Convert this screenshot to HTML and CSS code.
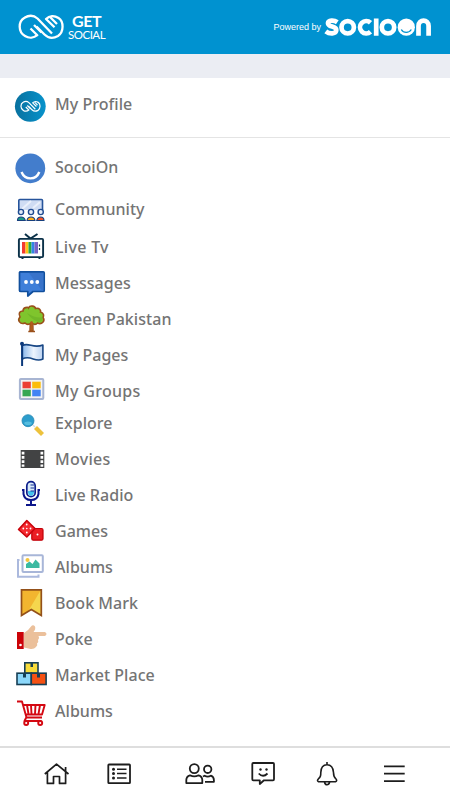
FILE: index.html
```
<!DOCTYPE html>
<html lang="en">
<head>
<meta charset="utf-8">
<title>Get Social</title>
<link rel="stylesheet" href="styles.css">
</head>
<body>
<header class="topbar">
  <div class="brand">
    <svg class="brand-mark" viewBox="18 14 46 26" fill="none" stroke="#fff" stroke-width="2.300" stroke-linejoin="round">
      <path d="M30.500 28.500L37.300 35.200C34 38 29 38.500 25 36C18 32 18 21.500 24.500 17.800C29 15 34 15.500 37.500 18.500L52 33.500M34 25L41.500 32.500"/>
      <path d="M54.500 27.300L46 19C49.500 15.500 54.500 15.500 58.500 18C64 21.500 64 32 58 36C53 38.800 48 38 44.500 34.500L36.500 26.500M50.500 17.500L57 24"/>
    </svg>
    <div class="brand-name"><span class="get">GET</span><span class="social">SOCIAL</span></div>
  </div>
  <div class="powered">
    <span class="powered-by">Powered by</span>
    <svg class="socioon" viewBox="324 17 109 20" role="img" aria-label="socioon" fill="none" stroke="#fff" stroke-width="4.700">
      <path d="M337.300 22.200C334 19.900 328.200 20 328 23.200C328 27.500 336.300 25.700 336.300 30C336.200 34.200 329.500 34.200 325.800 31.300"/>
      <circle cx="347.700" cy="27.300" r="6.200"/>
      <path d="M370.500 22.800A6.200 6.200 0 1 0 370.500 31.800M376.200 18.400V35.800"/>
      <circle cx="388" cy="27.300" r="6.200"/>
      <circle cx="406.300" cy="27.200" r="8.600" fill="#fff" stroke="none"/>
      <path d="M401.300 29.500C403.500 33.300 409 33.300 411.300 29.500" stroke="#0092d0" stroke-width="1.300"/>
      <path d="M418.500 35.800V26C418.500 18.800 428.600 18.800 428.600 26V35.800"/>
    </svg>
  </div>
</header>
<main>
  <section class="profile">
    <a class="row row-profile">
      <svg class="icon" viewBox="14 78 34 56">
        <defs><linearGradient id="disc"><stop stop-color="#08719f"/><stop offset="1" stop-color="#0792cb"/></linearGradient></defs>
        <circle cx="30.300" cy="106.300" r="15.400" fill="url(#disc)"/>
        <g transform="translate(20.200 100.600) scale(.445) translate(-18 -14)" fill="none" stroke="#fff" stroke-width="2.700">
          <path d="M30.500 28.500L37.300 35.200C34 38 29 38.500 25 36C18 32 18 21.500 24.500 17.800C29 15 34 15.500 37.500 18.500L52 33.500M34 25L41.500 32.500"/>
          <path d="M54.500 27.300L46 19C49.500 15.500 54.500 15.500 58.500 18C64 21.500 64 32 58 36C53 38.800 48 38 44.500 34.500L36.500 26.500M50.500 17.500L57 24"/>
        </g>
      </svg>
      <span class="label">My Profile</span>
    </a>
  </section>
  <nav class="menu">
    <a class="row row-first">
      <svg class="icon" viewBox="14 146 34 44"><circle cx="30.300" cy="168.300" r="14.900" fill="#437dcc"/><path d="M21.500 172C25 180.500 36 180.500 39.300 172" fill="none" stroke="#fff" stroke-width="2.400"/></svg>
      <span class="label">SocoiOn</span>
    </a>
    <a class="row row-community">
      <svg class="icon" viewBox="14 190 34 40">
        <path d="M18.800 210V200.500Q18.800 199.500 19.800 199.500H41.500Q42.500 199.500 42.500 200.500V210" fill="#cfdcf3" stroke="#26549b" stroke-width="1.600"/>
        <path d="M22 209L31 201M33 208L40 202" stroke="#eaf0fb" stroke-width="2"/>
        <path d="M17.500 220.500Q17.500 217 21 217T25.300 220.500Z" fill="#1c9c84" stroke="#173f7d" stroke-width="1.100"/>
        <path d="M27 220.500Q27.500 217 31 217T35 220.500Z" fill="#ffad17" stroke="#173f7d" stroke-width="1.100"/>
        <path d="M36.700 220.500Q37.500 217 40.700 217T44 220.500Z" fill="#f55224" stroke="#173f7d" stroke-width="1.100"/>
        <g fill="#e4ecf9" stroke="#1e4b91" stroke-width="1.400"><circle cx="21" cy="212" r="2.600"/><circle cx="31" cy="212" r="2.600"/><circle cx="40.700" cy="212" r="2.600"/></g>
      </svg>
      <span class="label">Community</span>
    </a>
    <a class="row">
      <svg class="icon" viewBox="14 230 34 36">
        <path d="M25 234L30.500 238.500L37.500 234M22.500 257V259M39.500 257V259" fill="none" stroke="#0b3148" stroke-width="2"/>
        <rect x="18.900" y="238.900" width="24.200" height="18.200" rx="1" fill="#fff" stroke="#0b3148" stroke-width="1.900"/>
        <path fill="#f23b2f" d="M22 242h3.500v11.500H22z"/><path fill="#ffc414" d="M25.500 242h3v11.500h-3z"/><path fill="#27a844" d="M28.500 242h3v11.500h-3z"/><path fill="#3184e5" d="M31.500 242h3v11.500h-3z"/><path fill="#7862c4" d="M34.500 242h3.500v11.500h-3.500z"/>
        <path d="M39.500 244.500v2M39.500 248v2" stroke="#0b3148" stroke-width="1.200"/>
      </svg>
      <span class="label wide">Live Tv</span>
    </a>
    <a class="row">
      <svg class="icon" viewBox="14 266 34 36">
        <path d="M20 271.900H43.300Q44.200 271.900 44.200 272.800V290.500Q44.200 291.500 43.200 291.500H33L27.800 296V291.500H21Q19.500 291.500 19.500 290.500V272.500Z" fill="#3f7fd9" stroke="#114f9d" stroke-width="1.700" stroke-linejoin="round"/>
        <path d="M29 273H43.300V290.500H42Z" fill="#3873ca"/>
        <g fill="#fff"><circle cx="26" cy="282" r="1.900"/><circle cx="31.800" cy="282" r="1.900"/><circle cx="37.300" cy="282" r="1.900"/></g>
      </svg>
      <span class="label">Messages</span>
    </a>
    <a class="row">
      <svg class="icon" viewBox="14 302 34 36">
        <path d="M30.500 318H32.700L33 331H30Z" fill="#c56b25" stroke="#9a501b" stroke-width="1.500"/>
        <path d="M25 323C20 325 17 320 20 317C18 313 20 311 23 311C23 307 28 307 28.500 308C30 304.800 35 306 35.500 308.500C40 307.500 41 311 40.500 312C44 313 44 316 43 317.500C45.500 321 42 325 37.500 323Q35 326 31.500 322.500Q28 326 25 323Z" fill="#7fc52d" stroke="#9a501b" stroke-width="1.600"/>
        <path d="M27 313Q31 319 38 322Q43 322 42.500 317Q37 319 27 313Z" fill="#72b829"/>
        <path d="M31.600 321.500V330" stroke="#b35c1d" stroke-width="2.400"/><path d="M28.300 331.500H35" stroke="#9a501b" stroke-width="1.500"/>
      </svg>
      <span class="label">Green Pakistan</span>
    </a>
    <a class="row">
      <svg class="icon" viewBox="14 338 34 36">
        <defs><linearGradient id="flag"><stop stop-color="#8ab7ea"/><stop offset=".55" stop-color="#edf4fd"/><stop offset="1" stop-color="#bad1f0"/></linearGradient></defs>
        <path d="M22.300 345.500C29 342 33 349 42.900 345V359C35 363 31 354.500 22.300 359Z" fill="url(#flag)" stroke="#174684" stroke-width="1.600" stroke-linejoin="round"/>
        <path d="M22.100 344V366" stroke="#0c397b" stroke-width="2"/><circle cx="22" cy="343.800" r="2" fill="#0c397b"/>
      </svg>
      <span class="label">My Pages</span>
    </a>
    <a class="row row-groups">
      <svg class="icon" viewBox="14 374 34 32">
        <rect x="19.900" y="378.900" width="23.400" height="20.200" rx="1" fill="#f3f3f3" stroke="#a8b5d2" stroke-width="2"/>
        <path fill="#eb4034" d="M22.500 381.700h8.300v6.600h-8.300z"/><path fill="#fcbd0b" d="M32.200 381.700h8.500v6.600h-8.500z"/><path fill="#35a752" d="M22.500 389.700h8.300v6.600h-8.300z"/><path fill="#4284f4" d="M32.200 389.700h8.500v6.600h-8.500z"/>
      </svg>
      <span class="label wide">My Groups</span>
    </a>
    <a class="row">
      <svg class="icon" viewBox="14 406 34 36">
        <path d="M32 424L35 427" stroke="#d5dee1" stroke-width="1.500"/><path d="M35.500 427.500L42.500 434.500" stroke="#edc23c" stroke-width="4.300"/>
        <circle cx="28" cy="420.700" r="6" fill="#2c9dcc" stroke="#2186b3" stroke-width=".8"/><ellipse cx="28" cy="423.300" rx="3.800" ry="1.800" fill="#55bddf"/>
      </svg>
      <span class="label">Explore</span>
    </a>
    <a class="row">
      <svg class="icon" viewBox="14 442 34 36">
        <path d="M20.700 450H44.300V468H20.700Z" fill="#424344"/>
        <path d="M21.700 451.800h2.700v2.700h-2.700zM21.700 456h2.700v2.700h-2.700zM21.700 460.200h2.700v2.700h-2.700zM21.700 464.400h2.700v2.300h-2.700zM40.500 451.800h2.700v2.700h-2.700zM40.500 456h2.700v2.700h-2.700zM40.500 460.200h2.700v2.700h-2.700zM40.500 464.400h2.700v2.300h-2.700z" fill="#fff"/>
      </svg>
      <span class="label wide">Movies</span>
    </a>
    <a class="row">
      <svg class="icon" viewBox="14 478 34 36">
        <rect x="26.800" y="481.700" width="8.400" height="15" rx="4.200" fill="#d9eaf9" stroke="#0c1e8b" stroke-width="1.700"/>
        <path d="M28 491H34V493Q33 496 31 496T28 493Z" fill="#43c2ed"/>
        <path d="M30.500 485H34M30.500 488H34M30.500 491H34" stroke="#173096" stroke-width="1.200"/>
        <path d="M22 490H23.500V494Q24.500 500 31 500T38.500 494V490H40M31 500V505M26 505H36" fill="none" stroke="#0c168b" stroke-width="2"/>
      </svg>
      <span class="label">Live Radio</span>
    </a>
    <a class="row">
      <svg class="icon" viewBox="14 514 34 36">
        <rect x="31.800" y="528.500" width="11.200" height="11.700" rx="1.500" fill="#ea1e24" stroke="#c10008" stroke-width="1.200"/>
        <path d="M26.800 520.500L35 528.500L26.800 537L18.500 529.500Z" fill="#f52b31" stroke="#c9030b" stroke-width="1.500" stroke-linejoin="round"/>
        <g fill="#fff"><circle cx="26.700" cy="524.500" r=".9"/><circle cx="23.300" cy="528.500" r=".9"/><circle cx="30.500" cy="528.500" r=".9"/><circle cx="26.800" cy="532.500" r=".9"/><circle cx="26.800" cy="528.500" r=".8"/><circle cx="37.500" cy="534.400" r="1"/></g>
      </svg>
      <span class="label">Games</span>
    </a>
    <a class="row">
      <svg class="icon" viewBox="14 550 34 36">
        <path d="M19.500 560H18V576.700H38.500V574.500" fill="none" stroke="#abb9dd" stroke-width="2"/>
        <rect x="22.500" y="555.300" width="20.300" height="16.700" rx="1" fill="#fff" stroke="#a8b6d8" stroke-width="2"/>
        <path d="M26 568V564L29.500 561.500L32.500 564L35.500 559.500L39.500 563.500V568Z" fill="#3cbaa2"/><circle cx="27.500" cy="560" r="2" fill="#f4c53c"/>
      </svg>
      <span class="label">Albums</span>
    </a>
    <a class="row">
      <svg class="icon" viewBox="14 586 34 36">
        <path d="M21.500 589.800H41.300V615.500L31.300 609.500L21.500 615.500Z" fill="#f2b52f"/><path d="M40.800 590L28 611.500L31.300 609.500L41.300 615.500Z" fill="#f5d64e"/>
        <path d="M21.500 589.800H41.300V615.500L31.300 609.500L21.500 615.500Z" fill="none" stroke="#935019" stroke-width="1.700"/>
      </svg>
      <span class="label">Book Mark</span>
    </a>
    <a class="row">
      <svg class="icon" viewBox="14 622 34 36">
        <path d="M24 633Q28 631 31 626.500Q33 624 35 626.500Q36 629 33.500 632H45Q48 634 45 636H38.500Q40 638 38 640Q39 642 37 643.500Q38 645 36 647Q34 649.500 30.500 649L24 647.500Z" fill="#ebc09b"/><path d="M17 632H23.700V649H17Z" fill="#cb0307"/><circle cx="20.500" cy="645" r="1.300" fill="#fff"/>
      </svg>
      <span class="label">Poke</span>
    </a>
    <a class="row">
      <svg class="icon" viewBox="14 658 34 36">
        <g stroke="#173f55" stroke-width="1.600"><rect x="24.800" y="662.800" width="13.200" height="10.400" fill="#f7dc3b"/><rect x="17" y="673.200" width="14.300" height="11.300" fill="#8bd7fa"/><rect x="31.300" y="673.200" width="14.800" height="11.300" fill="#f55113"/></g>
        <path d="M30.500 663H33V667H30.500zM23 673H26V677.500H23zM37 673H40V677.500H37z" fill="#173f55"/>
      </svg>
      <span class="label">Market Place</span>
    </a>
    <a class="row">
      <svg class="icon" viewBox="14 694 34 36" fill="none" stroke="#d40812" stroke-width="1.900">
        <path d="M17 701.500H22L26.500 717.500H42M22.800 705H44.700L42 714.500H26M26.500 717L24.500 721H41.500" stroke-linejoin="round"/>
        <path d="M27 705L28.500 714M31 705L31.500 714M35.500 705L35 714M40 705L38.500 714"/>
        <circle cx="26.200" cy="723" r="2" fill="#fff"/><circle cx="40.200" cy="723" r="2" fill="#fff"/>
      </svg>
      <span class="label">Albums</span>
    </a>
  </nav>
</main>
<footer class="tabs">
  <a class="tab"><svg viewBox="42 760 28 28"><path d="M44.800 774L56.500 764.200L68.500 774M47.400 772V783.400H53.500V776.500H59.500V783.400H65.600V772M65.600 771V767" stroke-width="1.700"/></svg></a>
  <a class="tab tab-list"><svg viewBox="105 760 28 28"><rect x="108.300" y="764.500" width="21.700" height="18.600" rx=".7"/><path d="M117 769.300H126.500M117 773.500H126.500M117 778H126.500" stroke-width="1.400"/><g fill="#1d1d1d" stroke="none"><circle cx="113.500" cy="769.300" r="1.500"/><circle cx="113.500" cy="773.500" r="1.500"/><circle cx="113.500" cy="778" r="1.500"/></g></svg></a>
  <a class="tab tab-people"><svg viewBox="182 760 36 28"><circle cx="194.300" cy="768.600" r="4.500"/><circle cx="207.700" cy="769.300" r="3.700"/><path d="M190 775.300Q194.300 777.500 198.600 775.300Q202.300 776.500 202.300 780V783.100H186.300V780Q186.300 776.500 190 775.300ZM203 776.500L204.600 775.700Q207.700 777.500 210.800 775.700Q213.900 776.800 213.900 780V781.800H205"/></svg></a>
  <a class="tab tab-chat"><svg viewBox="249 760 28 28"><path d="M253.300 763H273Q274 763 274 764V779.300Q274 780.300 273 780.300H264L259.800 784V780.300H253.300Q252.300 780.300 252.300 779.300V764Q252.300 763 253.300 763Z"/><path d="M258.700 773.500Q263 778 267.500 773.500"/><circle cx="260.500" cy="769.500" r="1.200" fill="#1d1d1d" stroke="none"/><circle cx="266.500" cy="769.500" r="1.200" fill="#1d1d1d" stroke="none"/></svg></a>
  <a class="tab tab-bell"><svg viewBox="313 760 28 28"><path d="M327 762V764.200M318.500 781.700Q316.500 781 318.500 778.700Q321 777 320.800 772.500Q321 764.700 327 764.700T333.500 772.500Q333.500 777 336 779Q337.500 781 335.500 781.700ZM324.500 782Q325 784.700 327 784.700T329.700 782" stroke-width="1.600"/></svg></a>
  <a class="tab tab-menu"><svg viewBox="380 760 28 28"><path d="M384 766.300H404.700M384 773.700H404.700M384 781.200H404.700"/></svg></a>
</footer>
</body>
</html>
```

FILE: styles.css
```
* { box-sizing: border-box; }
body {
  margin: 0;
  width: 450px;
  height: 800px;
  overflow: hidden;
  display: flex;
  flex-direction: column;
  background: #fff;
  font-family: "Noto Sans", "Open Sans", sans-serif;
}
svg { display: block; flex: none; overflow: visible; }
.topbar {
  height: 54px;
  flex: none;
  display: flex;
  justify-content: space-between;
  padding: 0 17px 0 18px;
  background: #0092d0;
  color: #fff;
}
.brand { display: flex; gap: 4px; padding-top: 13px; }
.brand-mark { width: 46px; height: 26px; margin-top: 1px; }
.brand-name { display: flex; flex-direction: column; width: 38px; }
.get { padding-left: 4px; font-family: Lato, sans-serif; font-size: 16px; font-weight: 700; line-height: 15px; letter-spacing: -0.4px; }
.social { font-family: Lato, sans-serif; font-size: 11.5px; font-weight: 400; line-height: 14px; letter-spacing: -0.5px; }
.powered { display: flex; gap: 3px; padding-top: 17px; }
.powered-by { font-family: "Liberation Sans", Arial, sans-serif; font-size: 9px; line-height: 20px; white-space: nowrap; }
.socioon { width: 109px; height: 20px; }
main { flex: none; height: 692px; background: #fff; border-top: 24px solid #ebedf3; }
.profile { height: 60px; border-bottom: 1px solid #e4e4e4; }
.menu { padding-top: 8px; }
.row { height: 36px; display: flex; align-items: center; gap: 7px; padding-left: 14px; }
.icon { width: 34px; height: 100%; }
.label { padding-bottom: 2px; color: #747474; font-size: 16px; font-weight: 500; line-height: 22px; letter-spacing: 0.04px; white-space: nowrap; }
.wide { letter-spacing: 0.3px; }
.row-profile { height: 56px; }
.row-profile .label { padding-bottom: 4px; }
.row-first { height: 44px; }
.row-community { height: 40px; }
.row-groups { height: 32px; }
.row-groups .label { padding: 2px 0 0; }
.tabs {
  height: 54px;
  flex: none;
  display: flex;
  padding: 12px 0 0 42px;
  background: #fff;
  border-top: 2px solid #dedede;
}
.tab svg { width: 28px; height: 28px; fill: none; stroke: #1d1d1d; stroke-width: 1.8; stroke-linejoin: round; }
.tab-list { margin-left: 35px; }
.tab-people { margin-left: 49px; }
.tab-people svg { width: 36px; }
.tab-chat { margin-left: 31px; }
.tab-bell { margin-left: 36px; }
.tab-menu { margin-left: 39px; }
```
